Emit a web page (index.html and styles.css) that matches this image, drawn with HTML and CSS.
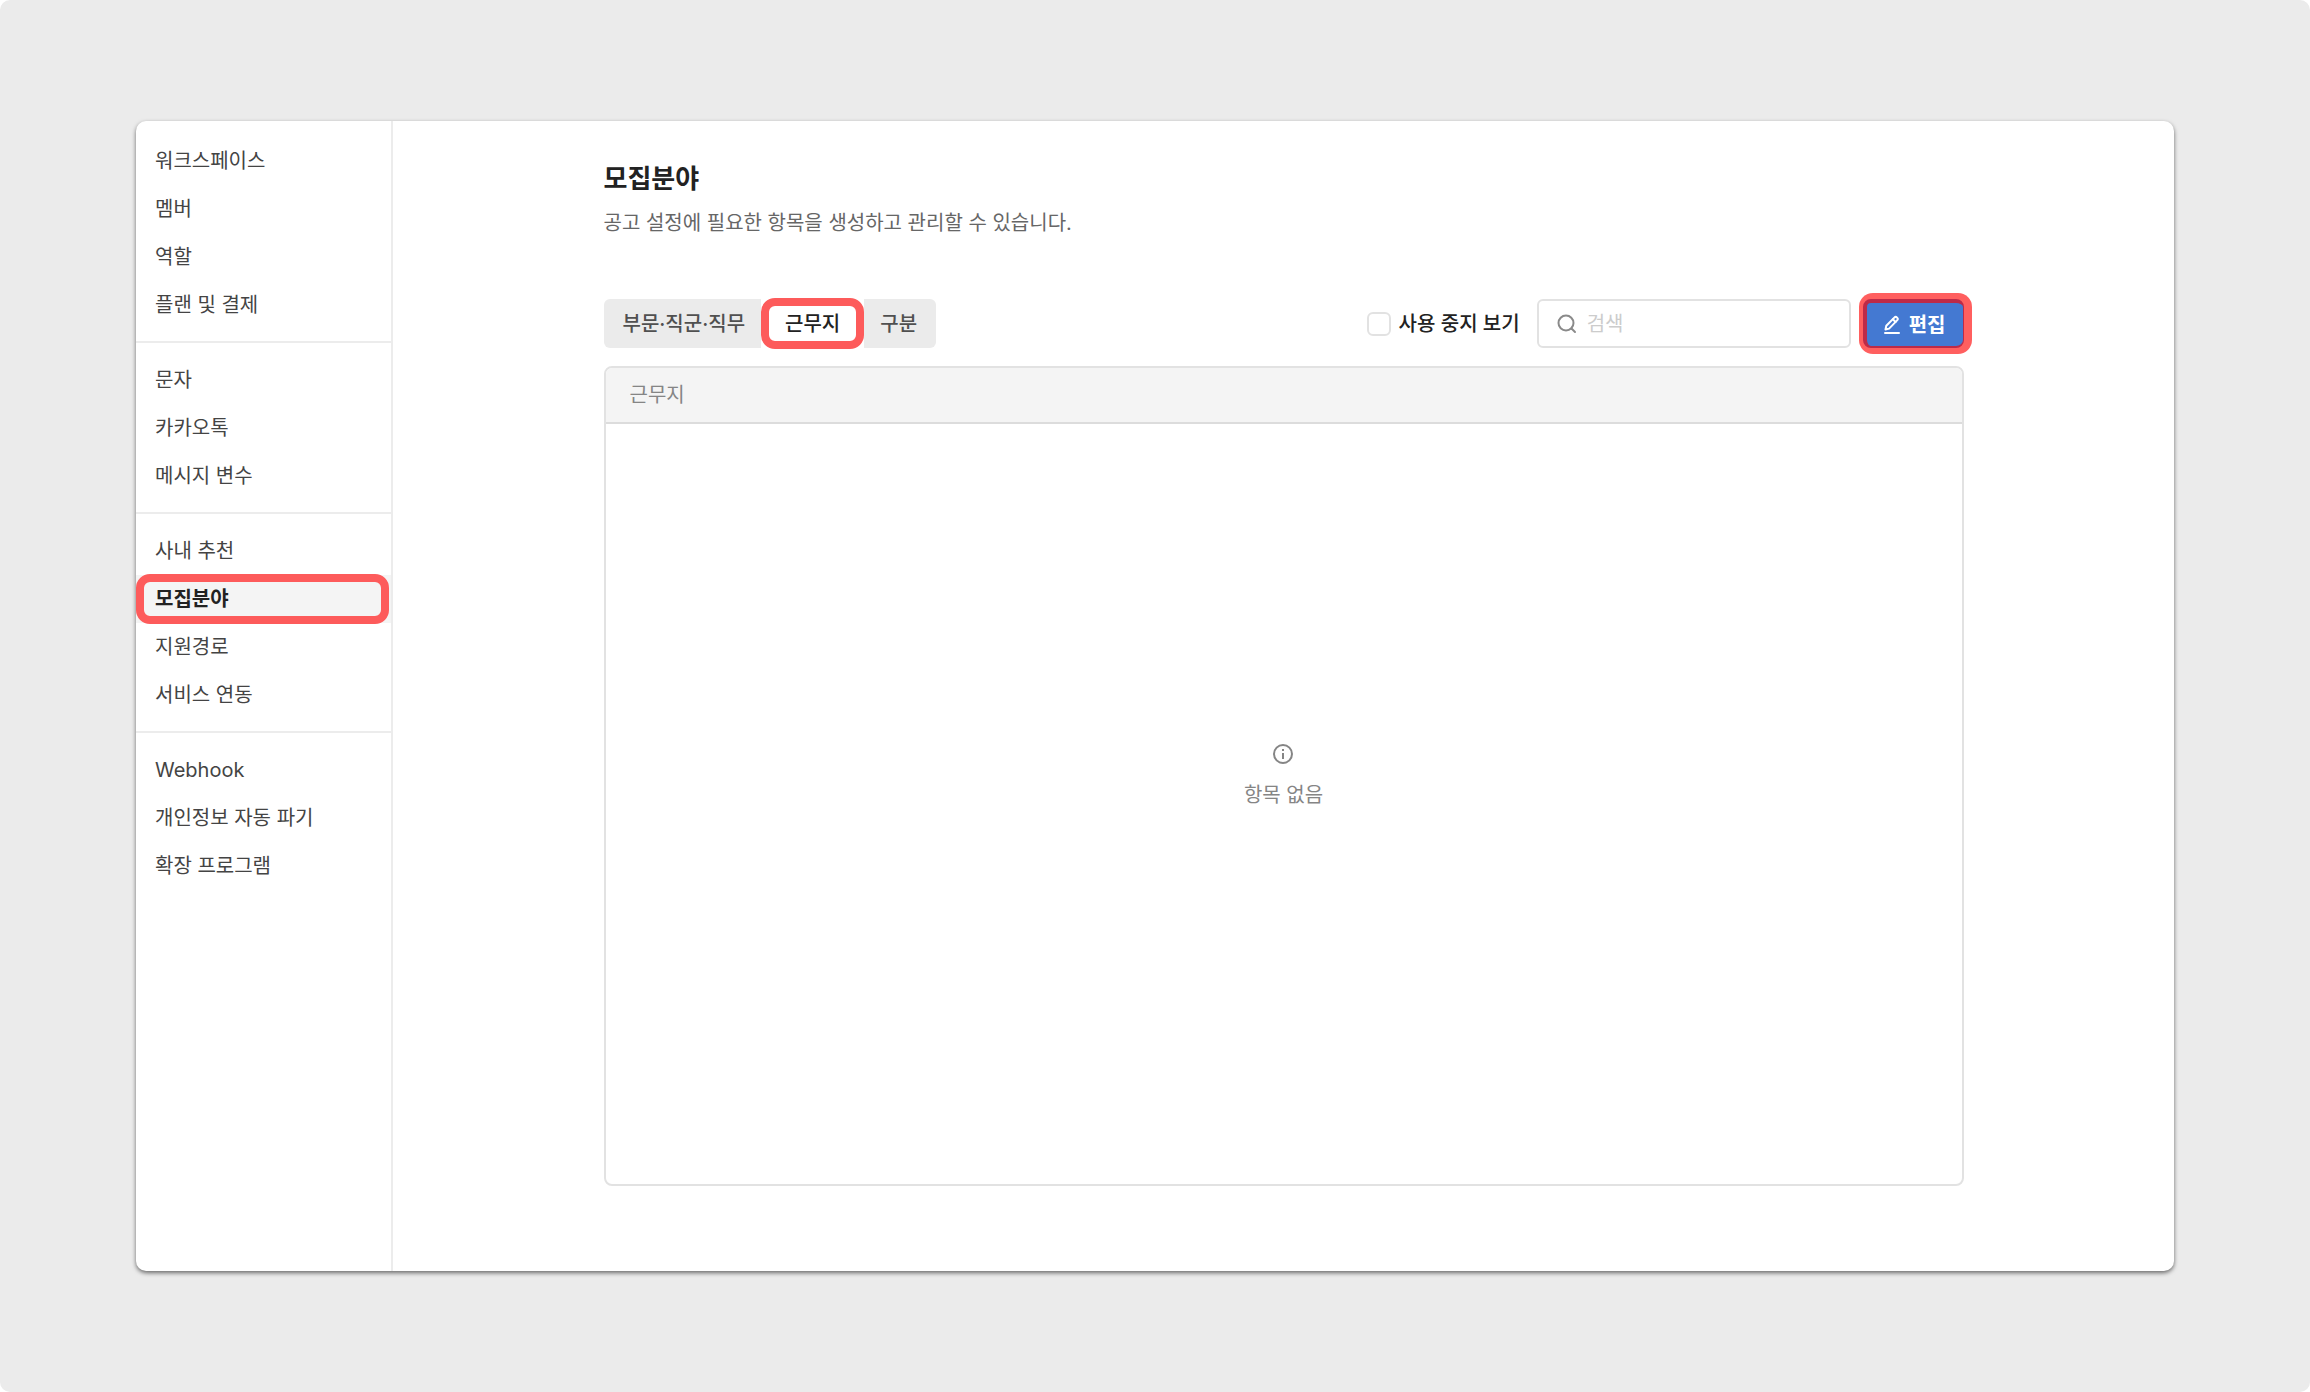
FILE: index.html
```html
<!DOCTYPE html>
<html lang="ko">
<head>
    <meta charset="UTF-8">
    <meta name="viewport" content="width=device-width, initial-scale=1.0">
    <title>모집분야</title>
    <link rel="stylesheet" href="styles.css">
</head>
<body>

<div class="page">
    <div class="window">
        <nav class="sidebar">
            <div class="menu-group">
                <a href="#">워크스페이스</a>
                <a href="#">멤버</a>
                <a href="#">역할</a>
                <a href="#">플랜 및 결제</a>
            </div>
            <div class="menu-group">
                <a href="#">문자</a>
                <a href="#">카카오톡</a>
                <a href="#">메시지 변수</a>
            </div>
            <div class="menu-group">
                <a href="#">사내 추천</a>
                <a href="#" class="active" aria-current="page">모집분야</a>
                <a href="#">지원경로</a>
                <a href="#">서비스 연동</a>
            </div>
            <div class="menu-group">
                <a href="#">Webhook</a>
                <a href="#">개인정보 자동 파기</a>
                <a href="#">확장 프로그램</a>
            </div>
        </nav>

        <main class="content">
            <h1>모집분야</h1>
            <p class="description">공고 설정에 필요한 항목을 생성하고 관리할 수 있습니다.</p>

            <div class="toolbar">
                <div class="tabs">
                    <button type="button">부문·직군·직무</button>
                    <button type="button" class="selected">근무지</button>
                    <button type="button">구분</button>
                </div>
                <div class="actions">
                    <label class="check"><input type="checkbox">사용 중지 보기</label>
                    <label class="search">
                        <svg width="20" height="20" viewBox="0 0 20 20" fill="none" stroke="#8a8a8a" stroke-width="2" stroke-linecap="round">
                            <circle cx="9" cy="9" r="7.5"/>
                            <path d="M14.5 14.5L18 18"/>
                        </svg>
                        <input type="text" placeholder="검색" aria-label="검색">
                    </label>
                    <button type="button" class="edit-button">
                        <svg width="18" height="20" viewBox="0 0 18 20" fill="none" stroke="#fff" stroke-width="2" stroke-linecap="round" stroke-linejoin="round">
                            <path d="M2.5 14.5L3.3 10.8L11.3 2.6C12.1 1.8 13.3 1.8 14.1 2.6C14.9 3.4 14.9 4.6 14.1 5.4L6.1 13.6Z"/>
                            <path d="M9.8 4.2L12.6 7"/>
                            <path d="M2 18H16"/>
                        </svg>
                        편집
                    </button>
                </div>
            </div>

            <table class="item-table">
                <thead>
                    <tr><th>근무지</th></tr>
                </thead>
                <tbody>
                    <tr>
                        <td>
                            <div class="empty">
                                <svg width="22" height="22" viewBox="0 0 22 22" fill="none" stroke="#858585" stroke-width="2">
                                    <circle cx="11" cy="11" r="9"/>
                                    <path d="M11 10V16M11 6V8"/>
                                </svg>
                                <span>항목 없음</span>
                            </div>
                        </td>
                    </tr>
                </tbody>
            </table>
        </main>
    </div>
</div>

</body>
</html>
```
FILE: styles.css
```css
* {
    box-sizing: border-box;
}
body {
    margin: 0;
    background: #fff;
    color: #222;
    font-family: "Inter", "Noto Sans CJK KR", sans-serif;
    font-size: 20px;
    line-height: 28px;
}
button, input {
    font: inherit;
    color: inherit;
}
.page {
    display: flex;
    min-height: 100vh;
    padding: 121px 136px;
    background: #ebebeb;
    border-radius: 10px;
}
.window {
    display: flex;
    flex: 1;
    background: #fff;
    border-radius: 10px;
    box-shadow: 0 2px 4px rgba(0, 0, 0, 0.55);
}

/* sidebar */
.sidebar {
    flex: none;
    width: 257px;
    padding-top: 3px;
    border-right: 2px solid #ececec;
}
.menu-group {
    padding: 13px 0 12px;
    border-bottom: 2px solid #ececec;
}
.menu-group:last-child {
    border-bottom: none;
}
.menu-group a {
    display: block;
    padding: 10px 19px;
    color: #444;
    text-decoration: none;
}
.menu-group a.active {
    position: relative;
    background: #f4f4f4;
    color: #222;
    font-weight: 700;
}
.menu-group a.active::after {
    content: "";
    position: absolute;
    inset: -1px 2px -1px 0;
    border: 8px solid #fd5b5b;
    border-radius: 14px;
}

/* content */
.content {
    display: flex;
    flex-direction: column;
    flex: 1;
    max-width: 1408px;
    margin: 0 auto;
    padding: 39px 24px 85px;
}
h1 {
    margin: 0;
    font-size: 26px;
    line-height: 38px;
    font-weight: 700;
}
.description {
    margin: 11px 0 62px;
    color: #666;
}
.toolbar {
    display: flex;
    justify-content: space-between;
    margin-bottom: 18px;
}
.tabs {
    display: flex;
    background: #ebebeb;
    border-radius: 6px;
}
.tabs button {
    height: 49px;
    padding: 0 19px;
    border: none;
    background: none;
    color: #505050;
    font-weight: 500;
}
.tabs .selected {
    position: relative;
    padding: 0 24px;
    margin: 0 -3px;
    background: #fff;
    color: #222;
}
.tabs .selected::after {
    content: "";
    position: absolute;
    inset: -1px 0;
    border: 8px solid #fd5b5b;
    border-radius: 14px;
}
.actions {
    display: flex;
    align-items: center;
}
.check {
    display: flex;
    align-items: center;
    gap: 8px;
    margin-right: 17px;
    font-weight: 500;
}
.check input {
    appearance: none;
    width: 24px;
    height: 24px;
    margin: 0;
    border: 2px solid #e2e2e2;
    border-radius: 6px;
    background: #fff;
}
.search {
    display: flex;
    align-items: center;
    gap: 10px;
    width: 314px;
    height: 49px;
    margin-right: 12px;
    padding: 0 18px;
    border: 2px solid #e2e2e2;
    border-radius: 6px;
}
.search input {
    flex: 1;
    min-width: 0;
    padding: 0;
    border: none;
    outline: none;
}
.search input::placeholder {
    color: #ccc;
}
.edit-button {
    display: flex;
    align-items: center;
    gap: 8px;
    height: 49px;
    padding: 0 17px 0 16px;
    border: solid #bd2a48;
    border-width: 4px 1px 2px 4px;
    border-radius: 8px;
    background: #4479d2;
    box-shadow: 2px 0 0 6px #ff5f5f;
    color: #fff;
    font-weight: 700;
}

/* table */
.item-table {
    flex: 1;
    display: flex;
    flex-direction: column;
    border: 2px solid #e2e2e2;
    border-radius: 8px;
    overflow: hidden;
}
.item-table tbody {
    flex: 1;
    display: flex;
}
.item-table tr {
    display: flex;
    flex: 1;
}
.item-table th {
    flex: 1;
    padding: 13px 24px;
    border-bottom: 2px solid #dcdcdc;
    background: #f4f4f4;
    color: #858585;
    font-weight: 400;
    text-align: left;
}
.item-table td {
    flex: 1;
    display: flex;
    align-items: center;
    justify-content: center;
    padding: 0 0 56px;
}
.empty {
    display: flex;
    flex-direction: column;
    align-items: center;
    gap: 16px;
    color: #858585;
}
```
